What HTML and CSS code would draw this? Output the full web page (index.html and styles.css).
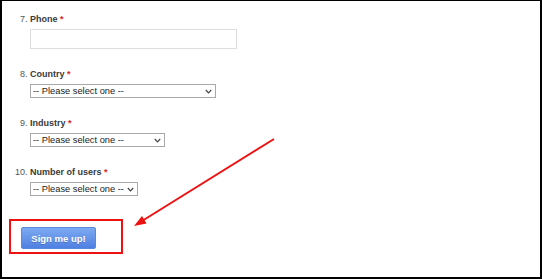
FILE: index.html
```html
<!DOCTYPE html>
<html lang="en">
<head>
    <meta charset="UTF-8">
    <meta name="viewport" content="width=device-width, initial-scale=1.0">
    <title>Sign up</title>
    <link rel="stylesheet" href="styles.css">
</head>
<body>
    <div class="frame">
        <ol class="fields" start="7">
            <li class="field">
                <label class="field-label" for="phone">Phone <span class="required">*</span></label>
                <input class="text-input" type="text" id="phone" />
            </li>
            <li class="field">
                <label class="field-label" for="country">Country <span class="required">*</span></label>
                <div class="select-wrap select-wide">
                    <select class="select" id="country">
                        <option>-- Please select one --</option>
                    </select>
                    <svg class="chevron" width="7" height="5" viewBox="0 0 7 5"><path d="M0.8 1 L3.5 3.8 L6.2 1" fill="none" stroke="#444" stroke-width="1.2" /></svg>
                </div>
            </li>
            <li class="field">
                <label class="field-label" for="industry">Industry <span class="required">*</span></label>
                <div class="select-wrap select-mid">
                    <select class="select" id="industry">
                        <option>-- Please select one --</option>
                    </select>
                    <svg class="chevron" width="7" height="5" viewBox="0 0 7 5"><path d="M0.8 1 L3.5 3.8 L6.2 1" fill="none" stroke="#444" stroke-width="1.2" /></svg>
                </div>
            </li>
            <li class="field">
                <label class="field-label" for="users">Number of users <span class="required">*</span></label>
                <div class="select-wrap select-small">
                    <select class="select" id="users">
                        <option>-- Please select one --</option>
                    </select>
                    <svg class="chevron" width="7" height="5" viewBox="0 0 7 5"><path d="M0.8 1 L3.5 3.8 L6.2 1" fill="none" stroke="#444" stroke-width="1.2" /></svg>
                </div>
            </li>
        </ol>
        <div class="callout">
            <button class="submit-btn" type="button">Sign me up!</button>
        </div>

        <!-- annotation arrow pointing at the button -->
        <svg class="arrow" width="542" height="279" viewBox="0 0 542 279">
            <line x1="274" y1="139" x2="142" y2="221" stroke="#ee1111" stroke-width="2" />
            <polygon points="134,226 146.5,223.4 142,216" fill="#ee1111" />
        </svg>
    </div>
</body>
</html>
```

FILE: styles.css
```css
body {
    margin: 0;
    padding: 0;
    background: #fff;
}

.frame {
    position: relative;
    width: 542px;
    height: 279px;
    box-sizing: border-box;
    border: 2px solid #000;
    border-top-width: 1px;
    background: #fff;
    font-family: "Liberation Sans", Arial, sans-serif;
    overflow: hidden;
}

.fields {
    list-style: decimal;
    margin: 0;
    padding: 12px 0 0 28px;
}

.field {
    font-size: 9px;
    margin-bottom: 19px;
}

.field::marker {
    color: #555;
}

.field-label {
    display: block;
    font-size: 9px;
    line-height: 12px;
    font-weight: bold;
    color: #3a3a3a;
}

.required {
    color: #dd2222;
}

.text-input {
    display: block;
    margin: 4px 0 0;
    width: 207px;
    height: 20px;
    box-sizing: border-box;
    border: 1px solid #dedede;
    padding: 0 4px;
}

.select-wrap {
    position: relative;
    margin-top: 4px;
    height: 14px;
}

.select {
    display: block;
    width: 100%;
    height: 14px;
    box-sizing: border-box;
    margin: 0;
    padding: 0 12px 0 2px;
    border: 1px solid #a9a9a9;
    border-radius: 0;
    appearance: none;
    background: #fff;
    color: #1a1a1a;
    font-family: "Liberation Sans", Arial, sans-serif;
    font-size: 9.3px;
    line-height: 12px;
}

.chevron {
    position: absolute;
    top: 5px;
    right: 4px;
    pointer-events: none;
}

.select-wide {
    width: 186px;
}

.select-mid {
    width: 135px;
}

.select-small {
    width: 108px;
}

.callout {
    width: fit-content;
    margin: 23px 0 0 7px;
    padding: 6px 25px 3px 10px;
    border: 2px solid #ee1111;
}

.submit-btn {
    display: block;
    width: 75px;
    height: 22px;
    padding: 0;
    border: 1px solid #5b88dd;
    border-radius: 2px;
    background: linear-gradient(#7eaaf1, #4f80e2);
    color: #fff;
    font-family: "Liberation Sans", Arial, sans-serif;
    font-size: 9.5px;
    font-weight: bold;
    text-shadow: 0 1px 0 rgba(0, 0, 0, 0.2);
    cursor: pointer;
}

.arrow {
    position: absolute;
    top: -1px;
    left: -2px;
    pointer-events: none;
}
```
